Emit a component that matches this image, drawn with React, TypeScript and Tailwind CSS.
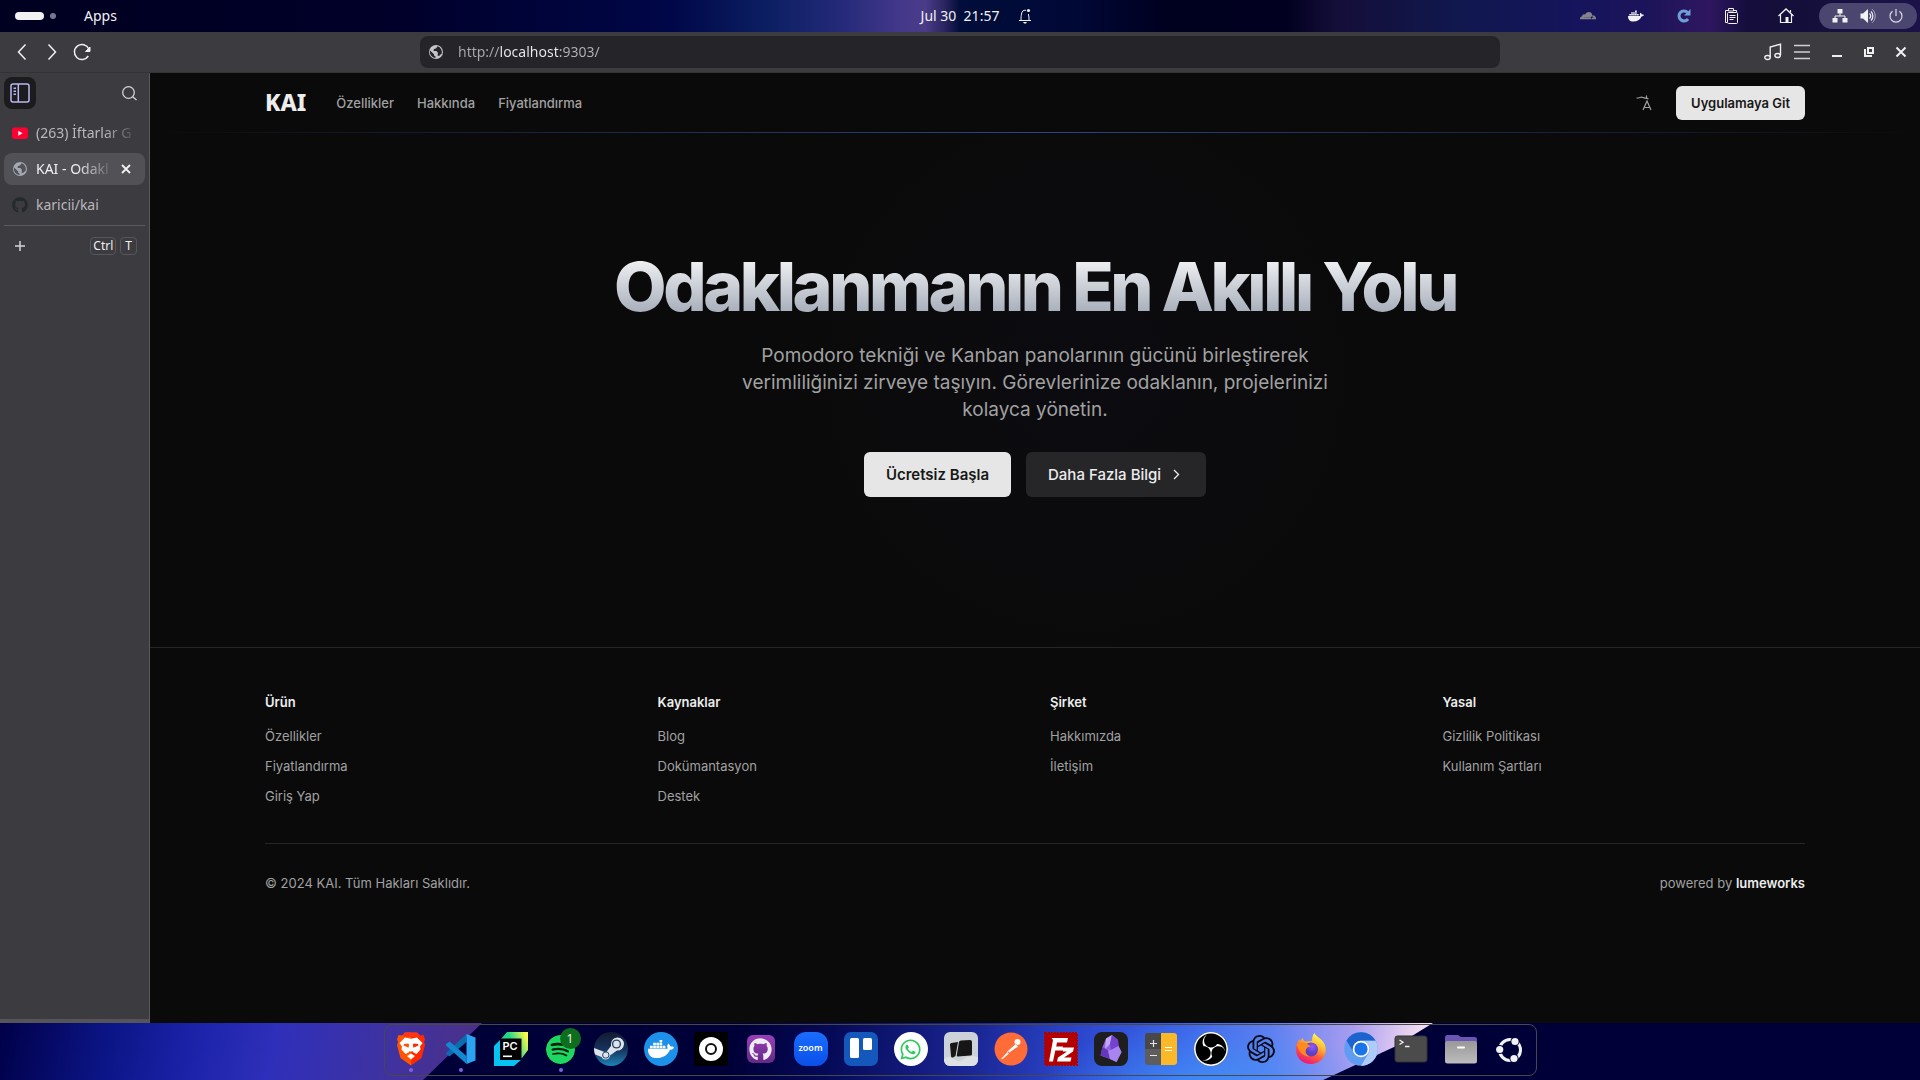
import type { ReactNode } from "react";
import { FaDocker, FaGithub, FaCloudflare, FaWhatsapp } from "react-icons/fa";
import { SiSpotify, SiOpenai, SiObsstudio } from "react-icons/si";

/* ---------- wallpaper ---------- */

function TopWallpaper() {
  return (
    <svg className="absolute inset-0 h-full w-full" viewBox="0 0 1920 32" preserveAspectRatio="none" aria-hidden="true">
      <defs>
        <linearGradient id="topWall" gradientUnits="userSpaceOnUse" x1="0" y1="0" x2="1920" y2="0">
          <stop offset="0" stopColor="#000020" />
          <stop offset="0.21" stopColor="#00002a" />
          <stop offset="0.35" stopColor="#000748" />
          <stop offset="0.40" stopColor="#0b1f62" />
          <stop offset="0.44" stopColor="#262a7a" />
          <stop offset="0.468" stopColor="#43378a" />
          <stop offset="0.482" stopColor="#4a3c88" />
          <stop offset="0.492" stopColor="#2a2460" />
          <stop offset="0.50" stopColor="#010d3a" />
          <stop offset="0.56" stopColor="#000836" />
          <stop offset="0.61" stopColor="#00001f" />
          <stop offset="0.67" stopColor="#010020" />
          <stop offset="0.695" stopColor="#140e38" />
          <stop offset="0.76" stopColor="#10184e" />
          <stop offset="0.82" stopColor="#15145c" />
          <stop offset="0.86" stopColor="#1d145a" />
          <stop offset="0.89" stopColor="#2e1760" />
          <stop offset="0.91" stopColor="#150d3c" />
          <stop offset="0.94" stopColor="#140f3a" />
          <stop offset="1" stopColor="#1b1348" />
        </linearGradient>
      </defs>
      <rect width="1920" height="32" fill="url(#topWall)" />
    </svg>
  );
}

function DockWallpaper() {
  return (
    <svg className="absolute inset-0 h-full w-full" viewBox="0 0 1920 57" preserveAspectRatio="none" aria-hidden="true">
      <defs>
        <linearGradient id="wallLeft" gradientUnits="userSpaceOnUse" x1="0" y1="0" x2="470" y2="90">
          <stop offset="0" stopColor="#000048" />
          <stop offset="0.22" stopColor="#0b1484" />
          <stop offset="0.4" stopColor="#1b22a8" />
          <stop offset="0.57" stopColor="#2e2fba" />
          <stop offset="0.78" stopColor="#3d32a4" />
          <stop offset="1" stopColor="#4c3088" />
        </linearGradient>
        <linearGradient id="wallRight" gradientUnits="userSpaceOnUse" x1="740" y1="0" x2="1400" y2="120">
          <stop offset="0" stopColor="#000039" />
          <stop offset="0.14" stopColor="#050a58" />
          <stop offset="0.35" stopColor="#1a2694" />
          <stop offset="0.5" stopColor="#2b46cc" />
          <stop offset="0.65" stopColor="#3c62e8" />
          <stop offset="0.78" stopColor="#5f7ef0" />
          <stop offset="0.9" stopColor="#a79cf0" />
          <stop offset="1" stopColor="#f4dcf2" />
        </linearGradient>
        <radialGradient id="wallLow" gradientUnits="userSpaceOnUse" cx="0" cy="0" r="1" gradientTransform="translate(1210 70) scale(170 75)">
          <stop offset="0" stopColor="#3e94f8" stopOpacity="0.9" />
          <stop offset="1" stopColor="#3e8cf6" stopOpacity="0" />
        </radialGradient>
      </defs>
      <rect width="1920" height="57" fill="#000039" />
      <path d="M0 0H482L423 57H0Z" fill="url(#wallLeft)" />
      <path d="M700 0H1433L1394 24L1323 57H700Z" fill="url(#wallRight)" />
      <path d="M1000 0H1433L1394 24L1323 57H1000Z" fill="url(#wallLow)" />
    </svg>
  );
}

/* ---------- system bar ---------- */

function BellIcon() {
  return (
    <svg viewBox="0 0 16 16" className="size-4" fill="none" stroke="#f2f2f2" aria-hidden="true">
      <path d="M2 12.500H14M4 12C4 9 4.200 8 4.500 6C5 3 6 2.200 9 2.200M12 12C12 10 12 8 11.400 6" />
      <path d="M6 14H10L9 15.500H7Z" fill="#f2f2f2" stroke="none" />
      <circle cx="11.500" cy="2.500" r="1.600" fill="#f2f2f2" stroke="none" />
    </svg>
  );
}

function ClipboardIcon() {
  return (
    <svg viewBox="0 0 16 18" className="h-[18px] w-4" fill="none" stroke="#f2f2f2" aria-hidden="true">
      <path d="M4 3.500H1.500V15.500H3M10 3.500H12.500V5" />
      <path d="M4.500 1.500H9.500V4H4.500Z" />
      <rect x="3.500" y="5.500" width="10" height="11" rx="1" />
      <path d="M5.500 8.500H11.500M5.500 10.500H11.500M5.500 12.500H9.500" />
    </svg>
  );
}

function HomeIcon() {
  return (
    <svg viewBox="0 0 16 16" className="size-4" fill="none" stroke="#f2f2f2" aria-hidden="true">
      <path d="M0.500 8L8 1L15.500 8" strokeWidth="1.300" />
      <path d="M2.500 6.500V14.500H13.500V6.500M12.500 4.500V2" strokeWidth="1.200" />
      <rect x="7.500" y="9" width="3" height="5.500" fill="#f2f2f2" stroke="none" />
    </svg>
  );
}

function NetworkIcon() {
  return (
    <svg viewBox="0 0 16 16" className="size-4" fill="#f2f2f2" aria-hidden="true">
      <rect x="5.500" y="1" width="5" height="4.500" rx="0.500" />
      <rect x="0.500" y="10" width="5" height="4.500" rx="0.500" />
      <rect x="10.500" y="10" width="5" height="4.500" rx="0.500" />
      <path d="M8 5V8M3 10V8H13V10" fill="none" stroke="#f2f2f2" />
    </svg>
  );
}

function VolumeIcon() {
  return (
    <svg viewBox="0 0 16 16" className="size-4" fill="none" stroke="#f2f2f2" aria-hidden="true">
      <path d="M0.500 5.500H3L8 1V15L3 10.500H0.500Z" fill="#f2f2f2" stroke="none" />
      <path d="M9.500 5.500C11 7 11 9 9.500 10.500M11 3.500C13.500 6 13.500 10 11 12.500" strokeWidth="1.200" />
      <path d="M12 1.200C16.300 4.500 16.300 11.500 12 14.800" stroke="#b4afc8" />
    </svg>
  );
}

function PowerIcon() {
  return (
    <svg viewBox="0 0 16 16" className="size-4" fill="none" stroke="#dcdce4" strokeWidth="1.200" aria-hidden="true">
      <path d="M4.500 3.200A6 6 0 1 0 11.500 3.200M8 1V8" />
    </svg>
  );
}

function SystemBar() {
  return (
    <header className="relative h-8 shrink-0">
      <TopWallpaper />
      <div className="relative grid h-full grid-cols-[1fr_auto_1fr] items-center text-[14px] text-[#f2f2f2]">
        <div className="flex items-center pl-[15px]">
          <button aria-label="Workspaces" className="flex items-center gap-1.5">
            <span className="h-2 w-[29px] rounded-full bg-[#f2f2f2]" />
            <span className="size-1.5 rounded-full bg-[#777790]" />
          </button>
          <button className="ml-7 pb-0.5">Apps</button>
        </div>
        <div className="flex items-center gap-[18px] pl-[34px]">
          <button className="pb-0.5 whitespace-pre">Jul 30  21:57</button>
          <button aria-label="Notifications">
            <BellIcon />
          </button>
        </div>
        <div className="flex items-center justify-end pr-[3px]">
          <div className="flex items-center gap-8 pr-[25px]">
            <button aria-label="Cloudflare WARP">
              <FaCloudflare className="size-4 text-[#85838c]" />
            </button>
            <button aria-label="Docker">
              <FaDocker className="size-4 text-[#f2f2f2]" />
            </button>
            <button aria-label="Updates">
              <svg viewBox="0 0 16 16" className="size-4" fill="none" aria-hidden="true">
                <path d="M11.500 4.300A5 5 0 1 0 12 11" stroke="#6f9fd8" strokeWidth="3" />
                <path d="M8 7.500H14.500V1Z" fill="#6f9fd8" />
              </svg>
            </button>
            <button aria-label="Clipboard">
              <ClipboardIcon />
            </button>
            <button aria-label="Home" className="ml-1.5">
              <HomeIcon />
            </button>
          </div>
          <button aria-label="System menu" className="flex h-[26px] items-center gap-3 rounded-full bg-[#4b4670] px-[13px]">
            <NetworkIcon />
            <VolumeIcon />
            <PowerIcon />
          </button>
        </div>
      </div>
    </header>
  );
}

/* ---------- browser chrome ---------- */

function GlobeIcon({ color, hole }: { color: string; hole: string }) {
  return (
    <svg viewBox="0 0 16 16" className="size-4 shrink-0" aria-hidden="true">
      <circle cx="8" cy="8" r="7" fill={color} />
      <path
        d="M9.500 2.300L8 4.500L6 5L5.500 7H8.500L10 9L9.500 11.500L11 12L12.500 10.500L13.500 10A6 6 0 0 0 9.500 2.300ZM2 6.500L6 10.200V11.500L7.500 12.500V14A6 6 0 0 1 2 6.500Z"
        fill={hole}
      />
    </svg>
  );
}

function Toolbar() {
  return (
    <div className="flex h-[41px] shrink-0 items-center border-b border-[#333236] bg-[#3c3b40] text-[#f0f0f0]">
      <div className="flex flex-1 items-center gap-3 pl-[11px]">
        <button aria-label="Back" className="pl-0.5">
          <svg viewBox="0 0 18 18" className="size-[18px]" fill="none" stroke="currentColor" strokeWidth="1.500">
            <path d="M12.500 1.500L5.500 9L12.500 16.500" />
          </svg>
        </button>
        <button aria-label="Forward">
          <svg viewBox="0 0 18 18" className="size-[18px]" fill="none" stroke="currentColor" strokeWidth="1.500">
            <path d="M5.500 1.500L12.500 9L5.500 16.500" />
          </svg>
        </button>
        <button aria-label="Reload">
          <svg viewBox="0 0 18 18" className="size-[18px]" fill="none" stroke="currentColor" strokeWidth="1.500">
            <path d="M15.300 13A7.500 7.500 0 1 1 15.800 6" />
            <path d="M17 4V8.500H12.500Z" fill="currentColor" strokeWidth="1" />
          </svg>
        </button>
      </div>
      <form className="flex h-8 w-[56.25%] items-center gap-3.5 rounded-lg bg-[#252429] px-2">
        <GlobeIcon color="#c3c3c8" hole="#252429" />
        <input
          aria-label="Address"
          defaultValue="http://localhost:9303/"
          className="min-w-0 flex-1 bg-[linear-gradient(90deg,#a9a9ad_0_42px,#ececee_42px_100px,#b4b4b8_100px)] bg-clip-text pb-0.5 text-[14px] text-transparent outline-none"
        />
      </form>
      <div className="flex flex-1 items-center justify-end gap-[11px] pr-[11px]">
        <button aria-label="Media controls">
          <svg viewBox="0 0 18 18" className="size-[18px]" fill="none" stroke="currentColor" strokeWidth="1.400">
            <path d="M6.200 14V4L16.500 1.200V12" />
            <ellipse cx="3.500" cy="14.500" rx="2.700" ry="2" />
            <ellipse cx="13.600" cy="12.500" rx="2.700" ry="2" />
          </svg>
        </button>
        <button aria-label="Menu">
          <svg viewBox="0 0 18 18" className="size-[18px]" stroke="#cfcfd2" strokeWidth="1.600">
            <path d="M1 2.500H17M1 9H17M1 15.500H17" />
          </svg>
        </button>
        <div className="ml-[7px] flex items-center gap-4">
          <button aria-label="Minimize">
            <svg viewBox="0 0 16 16" className="size-4" fill="#f0f0f0">
              <rect x="3" y="11" width="10" height="2" />
            </svg>
          </button>
          <button aria-label="Restore">
            <svg viewBox="0 0 16 16" className="size-4" fill="none" stroke="#f0f0f0" strokeWidth="2">
              <path d="M4 5V12H11" />
              <rect x="7" y="4" width="5" height="5" />
            </svg>
          </button>
          <button aria-label="Close window">
            <svg viewBox="0 0 16 16" className="size-4" fill="none" stroke="#f0f0f0" strokeWidth="2">
              <path d="M3.500 3.500L12.500 12.500M12.500 3.500L3.500 12.500" />
            </svg>
          </button>
        </div>
      </div>
    </div>
  );
}

function Tab({ icon, title, active = false, fade = "" }: { icon: ReactNode; title: string; active?: boolean; fade?: string }) {
  return (
    <li className={active ? "flex h-8 items-center rounded-lg bg-[#525156] pr-2.5 pl-2" : "flex h-8 items-center pr-1.5 pl-2"}>
      <button className="flex min-w-0 flex-1 items-center gap-2">
        {icon}
        <span className={`min-w-0 flex-1 pb-0.5 text-left text-[14px] whitespace-nowrap ${active ? "text-[#f2f2f2]" : "text-[#b9b8bc]"} ${fade}`}>
          {title}
        </span>
      </button>
      {active && (
        <button aria-label="Close tab" className="pr-0.5 pl-1">
          <svg viewBox="0 0 14 14" className="size-3.5" stroke="#f2f2f2" strokeWidth="1.800">
            <path d="M3 3L11 11M11 3L3 11" />
          </svg>
        </button>
      )}
    </li>
  );
}

function Sidebar() {
  return (
    <aside className="flex w-[150px] shrink-0 flex-col border-r border-[#5a595e] bg-[#3c3b40]">
      <div className="flex items-center justify-between pt-1 pr-3 pl-1">
        <button aria-label="Toggle sidebar" className="flex size-8 items-center justify-center rounded-lg bg-[#1c1b1d]">
          <svg viewBox="0 0 20 20" className="size-5" fill="none" stroke="#b9b6f2" strokeWidth="1.500">
            <rect x="1" y="1" width="18" height="18" rx="2" />
            <path d="M8.300 1V19" />
            <path d="M3.500 5.200H6M3.500 8.200H6M3.500 11.200H6" />
          </svg>
        </button>
        <button aria-label="Search tabs">
          <svg viewBox="0 0 16 16" className="size-4" fill="none" stroke="#d4d4d7" strokeWidth="1.300">
            <circle cx="7.500" cy="7.500" r="5.800" />
            <path d="M11.700 11.700L15.500 15" />
          </svg>
        </button>
      </div>
      <ul className="mt-2 flex flex-col gap-1 pr-1 pl-1">
        <Tab
          title="(263) İftarlar G"
          fade="[mask-image:linear-gradient(90deg,#000_65%,transparent)]"
          icon={
            <svg viewBox="0 0 16 16" className="size-4 shrink-0" aria-hidden="true">
              <rect y="2.500" width="16" height="11.500" rx="2.500" fill="#ff0033" />
              <path d="M6.300 5.800V10.700L10.500 8.250Z" fill="#fff" />
            </svg>
          }
        />
        <Tab
          title="KAI - Odakl"
          active
          fade="[mask-image:linear-gradient(90deg,#000_50%,transparent)]"
          icon={<GlobeIcon color="#a3a9b3" hole="#525156" />}
        />
        <Tab title="karicii/kai" icon={<FaGithub className="size-4 shrink-0 text-[#24292e]" />} />
      </ul>
      <hr className="mx-1 mt-1 border-[#5a595e]" />
      <button className="mt-[11px] flex items-center pr-3 pl-[13px]" aria-label="New tab">
        <svg viewBox="0 0 14 14" className="size-3.5" stroke="#d4d4d7" strokeWidth="1.500">
          <path d="M7 2V12M2 7H12" />
        </svg>
        <span className="ml-auto flex gap-1 text-[12px] leading-4 text-[#f0f0f0]">
          <kbd className="rounded border border-[#56555a] px-0.5 font-[inherit]">Ctrl</kbd>
          <kbd className="rounded border border-[#56555a] px-1 font-[inherit]">T</kbd>
        </span>
      </button>
      <div className="mt-auto h-1 bg-[#555458]" />
    </aside>
  );
}

/* ---------- web page ---------- */

const navLinks = ["Özellikler", "Hakkında", "Fiyatlandırma"];

const footerColumns = [
  { title: "Ürün", links: ["Özellikler", "Fiyatlandırma", "Giriş Yap"] },
  { title: "Kaynaklar", links: ["Blog", "Dokümantasyon", "Destek"] },
  { title: "Şirket", links: ["Hakkımızda", "İletişim"] },
  { title: "Yasal", links: ["Gizlilik Politikası", "Kullanım Şartları"] },
];

function SiteHeader() {
  return (
    <header>
      <div className="mx-auto flex h-[59px] max-w-[1540px] items-center pt-px">
        <a href="#" className="pb-px font-['Noto_Sans',sans-serif] text-[23px] font-extrabold text-[#ededed]">
          KAI
        </a>
        <nav className="ml-[30px] flex gap-[23px] pt-px text-[13px] font-medium text-[#a1a1a1]">
          {navLinks.map((label) => (
            <a key={label} href="#">
              {label}
            </a>
          ))}
        </nav>
        <div className="ml-auto flex items-center gap-6">
          <button aria-label="Dil değiştir">
            <svg viewBox="0 0 16 16" className="size-4" fill="none" stroke="#a1a1a1" strokeWidth="1.200">
              <path d="M0.500 3C4 3 5 1.500 7 2.500C9 3.500 10 2.500 12.500 4M10.500 0.500V3.500" />
              <path d="M7 15L11 6L15 15M8 12.500H14" />
            </svg>
          </button>
          <a href="#" className="rounded-md bg-[#e6e6e6] px-[15px] py-[7px] text-[13px] leading-5 font-semibold text-[#171717]">
            Uygulamaya Git
          </a>
        </div>
      </div>
      <div className="h-px bg-[linear-gradient(90deg,transparent,#2a4684_50%,transparent)]" />
    </header>
  );
}

function Hero() {
  return (
    <section className="flex flex-col items-center bg-[radial-gradient(circle_310px_at_calc(50%+49px)_47%,#0c0b10,#0b0b0d_60%,#0a0a0a)] pt-[116px] pb-[150px] text-center">
      <h1 className="bg-linear-to-b from-white to-gray-400 bg-clip-text text-[68px] leading-[75px] font-extrabold tracking-tighter text-transparent">
        Odaklanmanın En Akıllı Yolu
      </h1>
      <p className="mt-[18px] max-w-[600px] text-[19px] leading-[27px] text-[#a1a1a1]">
        Pomodoro tekniği ve Kanban panolarının gücünü birleştirerek verimliliğinizi zirveye taşıyın. Görevlerinize odaklanın,
        projelerinizi kolayca yönetin.
      </p>
      <div className="mt-[29px] flex gap-[15px] text-[15px] leading-[23px] font-semibold">
        <a href="#" className="rounded-md bg-[#e6e6e6] px-[22px] py-[11px] text-[#171717]">
          Ücretsiz Başla
        </a>
        <a href="#" className="flex items-center gap-2 rounded-md bg-[#262628] px-[22px] py-[11px] font-medium text-[#ededed]">
          Daha Fazla Bilgi
          <svg viewBox="0 0 15 15" className="size-[15px]" fill="none" stroke="currentColor" strokeWidth="1.300">
            <path d="M5 3L9.500 7.500L5 12" />
          </svg>
        </a>
      </div>
    </section>
  );
}

function SiteFooter() {
  return (
    <footer className="border-t border-[#262626] text-[13px] leading-5 text-[#a1a1a1]">
      <div className="mx-auto max-w-[1540px] pt-11">
        <div className="grid grid-cols-4 gap-[30px]">
          {footerColumns.map((column) => (
            <div key={column.title}>
              <h2 className="font-semibold text-[#ededed]">{column.title}</h2>
              <ul className="mt-3.5 flex flex-col gap-2.5">
                {column.links.map((link) => (
                  <li key={link}>
                    <a href="#">{link}</a>
                  </li>
                ))}
              </ul>
            </div>
          ))}
        </div>
        <div className="mt-[37px] flex justify-between border-t border-[#262626] pt-[29px]">
          <p>© 2024 KAI. Tüm Hakları Saklıdır.</p>
          <p>
            powered by{" "}
            <a href="#" className="font-semibold text-[#ededed]">
              lumeworks
            </a>
          </p>
        </div>
      </div>
    </footer>
  );
}

/* ---------- dock ---------- */

const icon = "size-[34px]";

function BraveIcon() {
  return (
    <svg viewBox="0 0 34 34" className={icon} aria-hidden="true">
      <defs>
        <linearGradient id="brave" x1="0" x2="1" y1="0" y2="0">
          <stop offset="0.500" stopColor="#ff5500" />
          <stop offset="0.500" stopColor="#ff2a00" />
        </linearGradient>
      </defs>
      <path d="M11 0.500H23L26 3.500L29.500 3L31 7.500L30 10L31 13L27.500 26L17 33.500L6.500 26L3 13L4 10L3 7.500L4.500 3L8 3.500Z" fill="url(#brave)" />
      <path d="M11 0.500H23L26 3.500L23 5H11L8 3.500Z" fill="#ff3315" />
      <path
        d="M11 5.500L17 6.800L23 5.500L28.500 11L26 14.500L26.500 17.500L22.500 22L19.500 20.500L18 18.800V17.500L19 16L21 15L24.500 13.500L24 12L20 11.500L18.800 12.500L19.500 16L18 17.500V19L17 20L16 19V17.500L14.500 16L15.200 12.500L14 11.500L10 12L9.500 13.500L13 15L15 16L16 17.500V18.800L14.500 20.500L11.500 22L7.500 17.500L8 14.500L5.500 11Z"
        fill="#fff"
      />
      <path d="M13 24L17 21.500L21 24L17 27.500Z" fill="#fff" />
    </svg>
  );
}

function VsCodeIcon() {
  return (
    <svg viewBox="0 0 34 34" className={icon} aria-hidden="true">
      <path d="M2 21L22.500 2V10L5.500 24.500L2 22Z" fill="#0b6cae" />
      <path d="M2 12L5.500 9.500L22.500 24V32L2 13.500Z" fill="#1387d0" />
      <path d="M22.500 2L31.500 5.500V28.500L22.500 32Z" fill="#2ba3f0" />
    </svg>
  );
}

function PyCharmIcon() {
  return (
    <svg viewBox="0 0 34 34" className={icon} aria-hidden="true">
      <defs>
        <linearGradient id="pycharm" x1="0" y1="0.400" x2="1" y2="0">
          <stop offset="0.350" stopColor="#21d789" />
          <stop offset="0.900" stopColor="#fcf84a" />
        </linearGradient>
      </defs>
      <path d="M13 0H34V18L28 26H7V7Z" fill="url(#pycharm)" />
      <path d="M0 14L8 6V27H28L20 34H0Z" fill="#07c3f2" />
      <rect x="6" y="6.500" width="21.500" height="21.500" fill="#000" />
      <text x="8.500" y="17.500" fill="#fff" fontSize="11" fontWeight="600" fontFamily="Inter, sans-serif">
        PC
      </text>
      <rect x="9" y="23.500" width="9" height="1.600" fill="#fff" />
    </svg>
  );
}

function SpotifyIcon() {
  return (
    <span className="relative flex size-[34px] items-center justify-center">
      <SiSpotify className="size-[29px] rounded-full bg-[#07210f] text-[#1ed760]" />
      <span className="absolute -top-1 -right-[3px] flex size-[21px] items-center justify-center rounded-full bg-[#0e6e1d] text-[12px] text-[#e8f4ea]">1</span>
    </span>
  );
}

function SteamIcon() {
  return (
    <span className="flex size-[34px] items-center justify-center overflow-hidden rounded-full bg-linear-to-b from-[#121a30] via-[#15325c] to-[#1a86b8]">
      <svg viewBox="0 0 34 34" className={icon} aria-hidden="true">
        <path d="M0 16L12 20.500L17 14V12A6.500 6.500 0 1 1 23 18.500L16 23.500A4.500 4.500 0 0 1 7.500 25L0 22Z" fill="#dfe4ea" />
        <circle cx="22.500" cy="12" r="4.600" fill="#26436c" />
        <circle cx="22.500" cy="12" r="3.200" fill="#dfe4ea" />
        <circle cx="11.800" cy="23" r="3.200" fill="none" stroke="#26436c" />
      </svg>
    </span>
  );
}

function RingIcon() {
  return (
    <svg viewBox="0 0 34 34" className={icon} aria-hidden="true">
      <rect width="34" height="34" rx="2" fill="#000" />
      <circle cx="17" cy="17" r="12" fill="#fff" />
      <circle cx="17" cy="17" r="5" fill="#fff" stroke="#111" strokeWidth="2" />
    </svg>
  );
}

function PostmanIcon() {
  return (
    <svg viewBox="0 0 34 34" className={icon} aria-hidden="true">
      <circle cx="17" cy="17" r="16.500" fill="#ff6c37" />
      <circle cx="23.500" cy="10" r="3" fill="#fff" />
      <path d="M21.500 12L24.500 14.500L15 21L14.500 19.500L13.500 20.500L13 19.500Z" fill="#fff" stroke="#d8562a" strokeWidth="0.400" />
      <path d="M7 27L13.500 20L15 21.500L8.500 27Z" fill="#fff" />
    </svg>
  );
}

function FileZillaIcon() {
  return (
    <svg viewBox="0 0 34 34" className={icon} aria-hidden="true">
      <rect x="1" y="1" width="32" height="32" fill="#b30000" stroke="#b30000" strokeWidth="2" strokeDasharray="2 1" />
      <path d="M7.500 6H24L23 10.500H13L12.200 14.500H19L18 18.500H11.300L9 29.500H5L9 8Z" fill="#fff" />
      <path d="M17 15.500H30L29 19.500L20 25.500H27.500L26.500 29.500H13L14 25.500L23 19.500H19Z" fill="#fff" />
    </svg>
  );
}

function ObsidianIcon() {
  return (
    <svg viewBox="0 0 34 34" className={icon} aria-hidden="true">
      <rect width="34" height="34" rx="8" fill="#1e1e1f" />
      <path d="M18 3L24 8L24.500 14L27.500 20L22.500 30L16 27L6.500 23.500L8.500 15L12 6.500Z" fill="#9064e0" />
      <path d="M18 3L12 6.500L11 17L16 12Z" fill="#c4a6fa" />
      <path d="M18 3L24 8L24.500 14L17 18L16 12Z" fill="#7440cf" />
      <path d="M6.500 23.500L8.500 15L14 18.500L16 27Z" fill="#6637bd" />
      <path d="M14 18.500L17 18L24.500 14L27.500 20L22.500 30L16 27Z" fill="#a784ee" />
    </svg>
  );
}

function CalculatorIcon() {
  return (
    <svg viewBox="0 0 34 34" className={icon} aria-hidden="true">
      <rect x="1" y="1" width="32" height="32" rx="3" fill="#5d5d5d" />
      <path d="M1 17H17V1H4A3 3 0 0 0 1 4Z" fill="#484848" />
      <path d="M17 1H30A3 3 0 0 1 33 4V30A3 3 0 0 1 30 33H17Z" fill="#fbb829" />
      <path d="M6 11.500H13M9.500 8V15M6 23.500H13" stroke="#e4e4e4" strokeWidth="1.200" />
      <path d="M21 15.500H28M21 18.500H28" stroke="#fff" />
    </svg>
  );
}

function FirefoxIcon() {
  return (
    <svg viewBox="0 0 34 34" className={icon} aria-hidden="true">
      <defs>
        <linearGradient id="fox" x1="0.800" y1="0" x2="0.300" y2="1">
          <stop offset="0.100" stopColor="#fff44f" />
          <stop offset="0.400" stopColor="#ffb02e" />
          <stop offset="0.650" stopColor="#ff5a3c" />
          <stop offset="1" stopColor="#e8127c" />
        </linearGradient>
        <radialGradient id="foxGlobe" cx="0.600" cy="0.300">
          <stop offset="0" stopColor="#9059ff" />
          <stop offset="1" stopColor="#5b3fc4" />
        </radialGradient>
      </defs>
      <path d="M20.500 1C22 5 29 7 31 13C34 23 27 32 17 32C8 32 2 25.500 2 17.500C2 12 4 9 5.500 7V10C6.500 8 8 6.500 9 6C9 8 10 9.500 12 9.500L18 9C18 6 18.500 3 20.500 1Z" fill="url(#fox)" />
      <circle cx="17" cy="17.500" r="7" fill="url(#foxGlobe)" />
      <path d="M3 12C8 9.500 13 11 17 14.500C14 14.500 12.500 16 12 17.500C11 20 12 23 16 24.500C9 25 4 19 3 12Z" fill="#ff8a1f" />
    </svg>
  );
}

function ChromiumIcon() {
  return (
    <svg viewBox="0 0 34 34" className={icon} aria-hidden="true">
      <circle cx="17" cy="17" r="16.800" fill="#5f9cf2" />
      <path d="M2.500 8.500A16.800 16.800 0 0 1 31.600 8.700H17A8.500 8.500 0 0 0 9.500 20Z" fill="#1c63cf" />
      <path d="M31.600 8.700A16.800 16.800 0 0 1 17 33.800L24.500 21.200A8.500 8.500 0 0 0 17 8.700Z" fill="#aecbfa" />
      <circle cx="17" cy="17" r="8.300" fill="#fff" />
      <circle cx="17" cy="17" r="6.600" fill="#1a73e8" />
    </svg>
  );
}

function TerminalIcon() {
  return (
    <svg viewBox="0 0 34 34" className={icon} aria-hidden="true">
      <rect x="1" y="4" width="32" height="26" rx="2.500" fill="#4b4b4b" stroke="#333" />
      <path d="M5.500 8L9 10.200L5.500 12.500M11 14.500H15.500" fill="none" stroke="#f0f0f0" strokeWidth="1.300" />
    </svg>
  );
}

function FilesIcon() {
  return (
    <svg viewBox="0 0 34 34" className={icon} aria-hidden="true">
      <defs>
        <linearGradient id="folder" x1="0" y1="0" x2="0" y2="1">
          <stop offset="0" stopColor="#989898" />
          <stop offset="1" stopColor="#bdbdbd" />
        </linearGradient>
      </defs>
      <path d="M1 5.500A2.500 2.500 0 0 1 3.500 3H14L17 5H30.500A2.500 2.500 0 0 1 33 7.500V14H1Z" fill="#6b55b4" />
      <rect x="1" y="9" width="32" height="22.500" rx="2.500" fill="url(#folder)" />
      <rect x="13" y="14.500" width="8" height="2" rx="1" fill="#fff" />
    </svg>
  );
}

function UbuntuIcon() {
  return (
    <svg viewBox="0 0 34 34" className={icon} aria-hidden="true">
      <circle cx="16" cy="18" r="10.500" fill="none" stroke="#f2f2f2" strokeWidth="3" />
      <circle cx="5.700" cy="17.500" r="4.600" fill="#000039" />
      <circle cx="21" cy="9.500" r="4.600" fill="#000039" />
      <circle cx="20" cy="26.500" r="4.600" fill="#000039" />
      <circle cx="5.700" cy="17.500" r="3.600" fill="#f2f2f2" />
      <circle cx="21" cy="9.500" r="3.600" fill="#f2f2f2" />
      <circle cx="20" cy="26.500" r="3.600" fill="#f2f2f2" />
    </svg>
  );
}

const dockApps: { name: string; art: ReactNode; running?: boolean }[] = [
  { name: "Brave", art: <BraveIcon />, running: true },
  { name: "Visual Studio Code", art: <VsCodeIcon />, running: true },
  { name: "PyCharm", art: <PyCharmIcon /> },
  { name: "Spotify", art: <SpotifyIcon />, running: true },
  { name: "Steam", art: <SteamIcon /> },
  {
    name: "Docker Desktop",
    art: (
      <span className="flex size-[34px] items-center justify-center rounded-full bg-[#1d91ea]">
        <FaDocker className="size-[26px] text-white" />
      </span>
    ),
  },
  { name: "Ring", art: <RingIcon /> },
  {
    name: "GitHub Desktop",
    art: (
      <span className="flex size-7 items-center justify-center rounded-md bg-linear-to-b from-[#9a3fb8] to-[#642a86]">
        <FaGithub className="size-[23px] text-[#f0eef4]" />
      </span>
    ),
  },
  {
    name: "Zoom",
    art: <span className="flex size-[34px] items-center justify-center rounded-xl bg-linear-to-b from-[#1a6dff] to-[#0b4fe8] pb-0.5 text-[9px] font-semibold text-white">zoom</span>,
  },
  {
    name: "Trello",
    art: (
      <svg viewBox="0 0 34 34" className={icon} aria-hidden="true">
        <rect width="34" height="34" rx="7" fill="#1558bc" />
        <rect x="6" y="6" width="9" height="20" rx="1.500" fill="#fff" />
        <rect x="19" y="6" width="9" height="12" rx="1.500" fill="#fff" />
      </svg>
    ),
  },
  {
    name: "WhatsApp",
    art: (
      <span className="flex size-[34px] items-center justify-center rounded-full bg-white">
        <FaWhatsapp className="size-[23px] text-[#2fc95e]" />
      </span>
    ),
  },
  {
    name: "Cards",
    art: (
      <svg viewBox="0 0 34 34" className={icon} aria-hidden="true">
        <rect width="34" height="34" rx="6" fill="#ccd2d7" />
        <path d="M0 27Q5 23 10 27T20 27T34 25V28A6 6 0 0 1 28 34H6A6 6 0 0 1 0 28Z" fill="#dde1e4" />
        <path d="M6 12.500Q6 11 7.500 11L14 10L11.500 24L9 25.500Q7 26 7 24Z" fill="#161616" />
        <path d="M15 10Q15.300 8.500 17 8.500L26 8Q28 8 28 10V22Q28 23.500 26.500 23.500L14 24.500Q12.500 24.500 12.800 23Z" fill="#161616" />
      </svg>
    ),
  },
  { name: "Postman", art: <PostmanIcon /> },
  { name: "FileZilla", art: <FileZillaIcon /> },
  { name: "Obsidian", art: <ObsidianIcon /> },
  { name: "Calculator", art: <CalculatorIcon /> },
  {
    name: "OBS Studio",
    art: (
      <span className="flex size-[34px] items-center justify-center rounded-full bg-black">
        <SiObsstudio className="size-[34px] text-white" />
      </span>
    ),
  },
  { name: "ChatGPT", art: <SiOpenai className="size-7 text-[#0b0b18]" /> },
  { name: "Firefox", art: <FirefoxIcon /> },
  { name: "Chromium", art: <ChromiumIcon /> },
  { name: "Terminal", art: <TerminalIcon /> },
  { name: "Files", art: <FilesIcon /> },
  { name: "Show Apps", art: <UbuntuIcon /> },
];

function Dock() {
  return (
    <footer className="relative flex h-[57px] shrink-0 justify-center pt-px">
      <DockWallpaper />
      <nav aria-label="Dock" className="relative h-[52px] rounded-lg border border-[#48484c]">
        <ul className="flex pl-px">
          {dockApps.map((app) => (
            <li key={app.name} className="flex w-[50px] flex-col items-center pt-[7px]">
              <button aria-label={app.name} className="flex h-[34px] items-center justify-center">
                {app.art}
              </button>
              {app.running && <span className="mt-0.5 size-1 rounded-full bg-[#7d63dc]" />}
            </li>
          ))}
        </ul>
      </nav>
    </footer>
  );
}

export default function App() {
  return (
    <div className="flex min-h-screen flex-col bg-[#0a0a0a] font-['Noto_Sans',sans-serif]">
      <SystemBar />
      <Toolbar />
      <div className="flex flex-1">
        <Sidebar />
        <main className="min-w-0 flex-1 bg-[#0a0a0a] font-[Inter,sans-serif]">
          <SiteHeader />
          <Hero />
          <SiteFooter />
        </main>
      </div>
      <Dock />
    </div>
  );
}
